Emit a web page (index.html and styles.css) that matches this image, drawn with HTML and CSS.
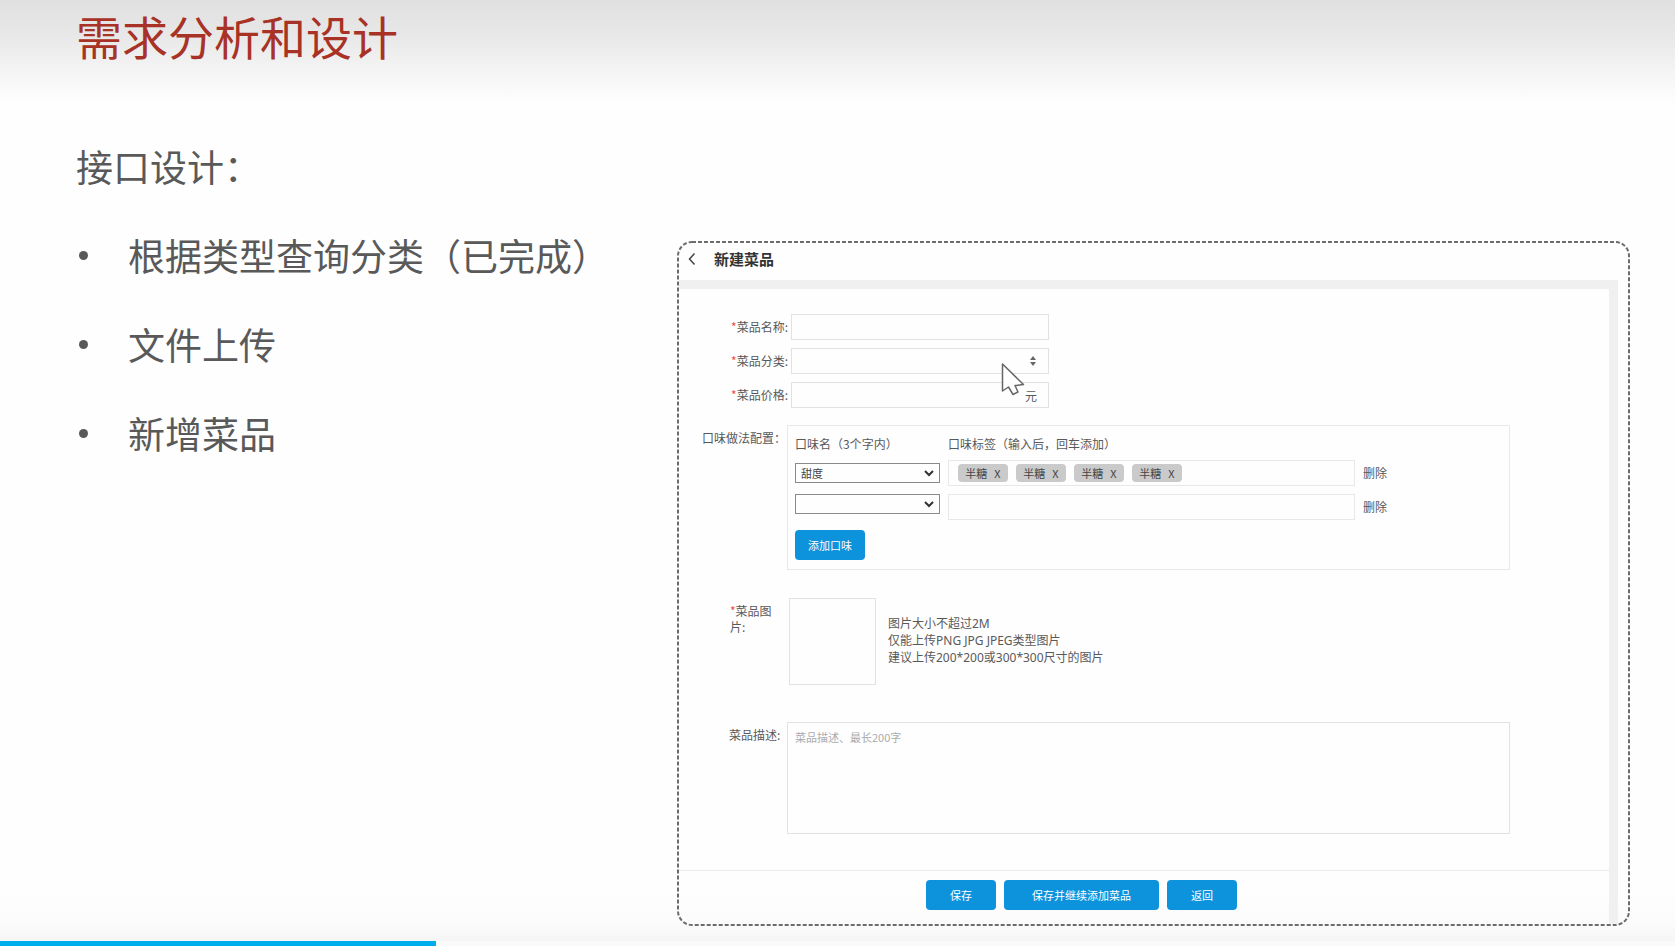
FILE: index.html
```html
<!DOCTYPE html>
<html lang="zh-CN">
<head>
<meta charset="utf-8">
<title>需求分析和设计</title>
<link rel="stylesheet" href="styles.css">
</head>
<body>
<main class="slide">
  <h1 class="slide-title">需求分析和设计</h1>
  <div class="slide-body">
    <section class="outline">
      <h2 class="outline-heading">接口设计：</h2>
      <ul class="outline-list">
        <li>根据类型查询分类（已完成）</li>
        <li>文件上传</li>
        <li>新增菜品</li>
      </ul>
    </section>
    <section class="panel">
      <svg class="panel-outline" aria-hidden="true"><rect class="panel-outline-rect" x="1" y="1" rx="14"/></svg>
      <header class="panel-header">
        <button class="back" type="button" aria-label="返回上一页">
          <svg width="8" height="14" viewBox="0 0 8 14"><path d="M6.5 1.5 1.5 7l5 5.5" fill="none" stroke="#444" stroke-width="1.5"/></svg>
        </button>
        <h3 class="panel-title">新建菜品</h3>
      </header>
      <form class="panel-form">
        <div class="fields">
          <div class="basic">
            <div class="row">
              <label class="label" for="name"><span class="req">*</span>菜品名称:</label>
              <input class="box" id="name" type="text">
            </div>
            <div class="row">
              <label class="label" for="category"><span class="req">*</span>菜品分类:</label>
              <div class="control">
                <select class="box" id="category"><option></option></select>
                <svg class="sorter" width="8" height="10" viewBox="0 0 8 10" aria-hidden="true"><path d="M4 0 7 4H1zM4 10 1 6h6z" fill="#666"/></svg>
                <svg class="cursor" width="24" height="34" viewBox="0 0 24 34" aria-hidden="true"><path d="M1.5 2v27l6-4 4.500 7.500 5-2.500-3-6.500 8.500-1z" fill="#fff" stroke="#666" stroke-width="1.500" stroke-linejoin="round"/></svg>
              </div>
            </div>
            <div class="row">
              <label class="label" for="price"><span class="req">*</span>菜品价格:</label>
              <div class="control">
                <input class="box" id="price" type="text">
                <span class="unit">元</span>
              </div>
            </div>
          </div>

          <div class="row row-top">
            <span class="label label-flavor" id="flavor-label">口味做法配置：</span>
            <div class="flavors" role="group" aria-labelledby="flavor-label">
              <span class="col-name">口味名（3个字内）</span>
              <span class="col-name col-tags">口味标签（输入后，回车添加）</span>
              <div class="flavor-select">
                <select aria-label="口味名 1"><option>甜度</option></select>
                <svg class="chevron" width="10" height="7" viewBox="0 0 10 7" aria-hidden="true"><path d="m1 1 4 4 4-4" fill="none" stroke="#333" stroke-width="2"/></svg>
              </div>
              <div class="tagbox">
                <button class="tag" type="button">半糖<span>X</span></button>
                <button class="tag" type="button">半糖<span>X</span></button>
                <button class="tag" type="button">半糖<span>X</span></button>
                <button class="tag" type="button">半糖<span>X</span></button>
              </div>
              <button class="remove" type="button">删除</button>
              <div class="flavor-select flavor-select-next">
                <select aria-label="口味名 2"><option></option></select>
                <svg class="chevron" width="10" height="7" viewBox="0 0 10 7" aria-hidden="true"><path d="m1 1 4 4 4-4" fill="none" stroke="#333" stroke-width="2"/></svg>
              </div>
              <input class="tagbox" type="text" aria-label="口味标签 2">
              <button class="remove" type="button">删除</button>
              <button class="btn btn-add" type="button">添加口味</button>
            </div>
          </div>

          <div class="row row-top row-image">
            <label class="label label-image" for="image"><span class="req">*</span>菜品图<br>片:</label>
            <button class="upload" id="image" type="button"></button>
            <p class="hint">图片大小不超过2M<br>仅能上传PNG JPG JPEG类型图片<br>建议上传200*200或300*300尺寸的图片</p>
          </div>

          <div class="row row-top">
            <label class="label label-desc" for="desc">菜品描述:</label>
            <textarea class="desc" id="desc" placeholder="菜品描述、最长200字"></textarea>
          </div>
        </div>
        <footer class="actions">
          <button class="btn" type="button">保存</button>
          <button class="btn btn-wide" type="button">保存并继续添加菜品</button>
          <button class="btn" type="button">返回</button>
        </footer>
      </form>
    </section>
  </div>
  <div class="track"><div class="played" style="width: 26%"></div></div>
</main>
</body>
</html>
```
FILE: styles.css
```css
* { box-sizing: border-box; }

body {
  margin: 0;
  background: #fefefe;
  color: #595959;
  font: 12px/16px "Noto Sans CJK SC", sans-serif;
}

h1, h2, h3, p, ul { margin: 0; padding: 0; font-weight: 400; }

button, input, select, textarea {
  margin: 0;
  padding: 0;
  border: 0;
  background: transparent;
  color: inherit;
  font: inherit;
}

svg { display: block; }

.slide {
  display: flex;
  flex-direction: column;
  min-height: 100vh;
  background:
    linear-gradient(#e0e0e0, #e7e8e7 36px, #f6f6f6 76px, #fefefe 104px, transparent 104px),
    linear-gradient(to top, #f5f5f5 5px, #fbfbfb 21px, #fefefe 56px);
}

.slide-title {
  padding: 0 76px;
  color: #a83226;
  font-size: 46px;
  line-height: 70px;
}

.slide-body {
  flex: 1;
  display: grid;
  grid-template-columns: 601px 1fr;
  padding: 52px 45px 15px 76px;
}

.outline { font-size: 37px; line-height: 89px; white-space: nowrap; }
.outline-heading { font-size: 37px; }
.outline-list { list-style: none; }
.outline-list li { display: flex; align-items: center; }
.outline-list li::before {
  content: "";
  width: 9px;
  height: 9px;
  margin: 0 40px 0 3px;
  border-radius: 50%;
  background: #595959;
}

.panel {
  position: relative;
  display: flex;
  flex-direction: column;
  margin-top: 119px;
  padding: 2px;
}
.panel-outline {
  position: absolute;
  inset: 0;
  width: 100%;
  height: 100%;
  pointer-events: none;
}
.panel-outline-rect {
  width: calc(100% - 2px);
  height: calc(100% - 2px);
  fill: none;
  stroke: #6c6c6c;
  stroke-width: 2px;
  stroke-dasharray: 4px 2px;
}

.panel-header {
  display: flex;
  align-items: center;
  gap: 16px;
  height: 46px;
  margin-right: 10px;
  padding: 0 7px 5px;
  border-bottom: 9px solid #f0f0f0;
}
.back { padding: 0 2px; }
.panel-title { color: #333; font-size: 15px; font-weight: 700; line-height: 20px; }

.panel-form {
  flex: 1;
  display: flex;
  flex-direction: column;
  margin-right: 10px;
  border-right: 9px solid #f0f0f0;
}

.fields { flex: 1; padding: 25px 99px 0 0; }
.row { display: flex; align-items: center; }
.row-top { align-items: flex-start; }
.basic { display: grid; gap: 8px; margin-bottom: 17px; }
.label { flex: none; width: 112px; padding-right: 3px; text-align: right; white-space: nowrap; }
.req { color: #f04a44; }

.box {
  width: 258px;
  height: 26px;
  padding: 0 8px;
  border: 1px solid #e2e2e2;
  appearance: none;
}
.control { position: relative; }
.control .box { display: block; }
.sorter { position: absolute; top: 8px; right: 12px; }
.cursor { position: absolute; top: 14px; right: 24px; z-index: 1; }
.unit { position: absolute; top: 6px; right: 12px; }

.label-flavor { width: 108px; padding: 5px 0 0 23px; text-align: left; }
.flavors {
  flex: 1;
  display: grid;
  grid-template-columns: 145px 407px 1fr;
  column-gap: 8px;
  row-gap: 8px;
  align-items: center;
  padding: 9px 7px;
  border: 1px solid #e8e8e8;
}
.col-name { line-height: 17px; }
.col-tags { grid-column: 2 / 4; }
.flavor-select { position: relative; }
.flavor-select-next { align-self: start; }
.flavor-select select {
  display: block;
  width: 100%;
  height: 20px;
  padding: 0 5px;
  border: 1px solid #8a8a8a;
  appearance: none;
  color: #444;
  font-size: 11px;
}
.chevron { position: absolute; top: 7px; right: 6px; pointer-events: none; }
.tagbox {
  display: flex;
  align-items: center;
  gap: 8px;
  height: 26px;
  padding: 0 9px;
  border: 1px solid #e8e8e8;
}
.tag {
  display: flex;
  align-items: center;
  justify-content: center;
  gap: 7px;
  width: 50px;
  height: 18px;
  border-radius: 4px;
  background: #cacaca;
  color: #444;
  font-size: 11px;
}
.remove { justify-self: start; }

.btn {
  width: 70px;
  height: 30px;
  border-radius: 4px;
  background: #0d92dc;
  color: #fff;
  font-size: 11px;
}
.btn-wide { width: 155px; }
.btn-add { margin: 2px 0 0; }

.row-image { margin: 28px 0 37px; }
.label-image {
  width: 110px;
  padding: 5px 14px 0 51px;
  text-align: left;
}
.upload { flex: none; width: 87px; height: 87px; border: 1px solid #e2e2e2; }
.hint {
  padding: 17px 0 0 12px;
  font-family: "Noto Sans", "Noto Sans CJK SC", sans-serif;
  line-height: 17px;
}

.label-desc { width: 108px; padding: 5px 0 0 50px; text-align: left; }
.desc {
  flex: 1;
  height: 112px;
  padding: 6px 7px;
  border: 1px solid #e2e2e2;
  resize: none;
  font-size: 11px;
}
.desc::placeholder { color: #aaa; opacity: 1; }

.actions {
  display: flex;
  gap: 8px;
  padding: 9px 0 14px 247px;
  border-top: 1px solid #ececec;
}

.track { height: 5px; background: #fafafa; }
.played { height: 100%; background: #00aeec; }
```
